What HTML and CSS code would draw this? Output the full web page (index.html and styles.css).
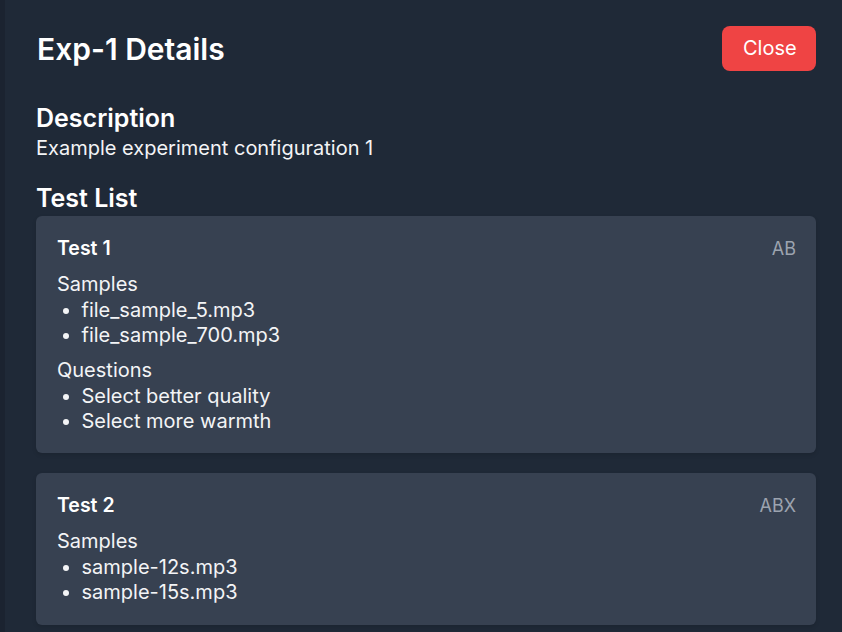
FILE: index.html
```html
<!DOCTYPE html>
<html lang="en">
<head>
<meta charset="utf-8">
<title>Exp-1 Details</title>
<link rel="stylesheet" href="styles.css">
</head>
<body>
<div class="modal">
  <header class="header">
    <h1 class="title">Exp-1 Details</h1>
    <button class="close-btn">Close</button>
  </header>
  <section class="desc-section">
    <h2 class="section-title">Description</h2>
    <p class="desc">Example experiment configuration 1</p>
  </section>
  <h2 class="section-title test-list-title">Test List</h2>
  <div class="test-list">
    <div class="card">
      <div class="card-head">
        <span class="card-title">Test 1</span>
        <span class="card-type">AB</span>
      </div>
      <div class="group">
        <div class="group-label">Samples</div>
        <ul class="items">
          <li>file_sample_5.mp3</li>
          <li>file_sample_700.mp3</li>
        </ul>
      </div>
      <div class="group">
        <div class="group-label">Questions</div>
        <ul class="items">
          <li>Select better quality</li>
          <li>Select more warmth</li>
        </ul>
      </div>
    </div>
    <div class="card">
      <div class="card-head">
        <span class="card-title">Test 2</span>
        <span class="card-type">ABX</span>
      </div>
      <div class="group">
        <div class="group-label">Samples</div>
        <ul class="items">
          <li>sample-12s.mp3</li>
          <li>sample-15s.mp3</li>
        </ul>
      </div>
    </div>
  </div>
</div>
</body>
</html>
```

FILE: styles.css
```css
* { box-sizing: border-box; }
html, body {
  margin: 0;
  padding: 0;
  height: 100%;
  overflow: hidden;
}
body {
  background: #1b2330;
  font-family: Inter, "Noto Sans", "Liberation Sans", sans-serif;
  color: #f3f4f6;
}
.modal {
  margin-left: 5px;
  min-height: 100%;
  background: #1f2937;
  padding: 26px 26px 26px 31px;
}
.header {
  display: flex;
  align-items: center;
  justify-content: space-between;
}
.title {
  margin: 0 0 0 1px;
  font-size: 30px;
  line-height: 36px;
  font-weight: 600;
  color: #ffffff;
}
.close-btn {
  font-family: inherit;
  font-size: 20px;
  line-height: 28px;
  color: #ffffff;
  background: #ef4444;
  border: none;
  border-radius: 8px;
  padding: 8px 21px 9px;
  width: 94px;
}
.desc-section {
  margin-top: 31px;
}
.section-title {
  margin: 0;
  font-size: 25px;
  line-height: 32px;
  font-weight: 600;
  color: #ffffff;
}
.desc {
  margin: 0;
  font-size: 20px;
  line-height: 28px;
}
.test-list-title {
  margin-top: 20px;
  margin-bottom: 2px;
}
.test-list {
  display: flex;
  flex-direction: column;
  gap: 20px;
}
.card {
  background: #374151;
  border-radius: 6px;
  padding: 19.5px 20px 20px 21px;
  box-shadow: 0 2px 4px rgba(0, 0, 0, 0.12);
}
.card-head {
  display: flex;
  justify-content: space-between;
  align-items: baseline;
}
.card-title {
  font-size: 19.5px;
  line-height: 24.5px;
  font-weight: 600;
  color: #ffffff;
}
.card-type {
  font-size: 18px;
  line-height: 24.5px;
  color: #9ca3af;
}
.group {
  margin-top: 10.5px;
}
.group-label {
  font-size: 20px;
  line-height: 24.5px;
  font-weight: 400;
}
.items {
  margin: 2px 0 0;
  padding-left: 24.5px;
  list-style: disc;
  font-size: 20px;
  line-height: 24.6px;
}
```
